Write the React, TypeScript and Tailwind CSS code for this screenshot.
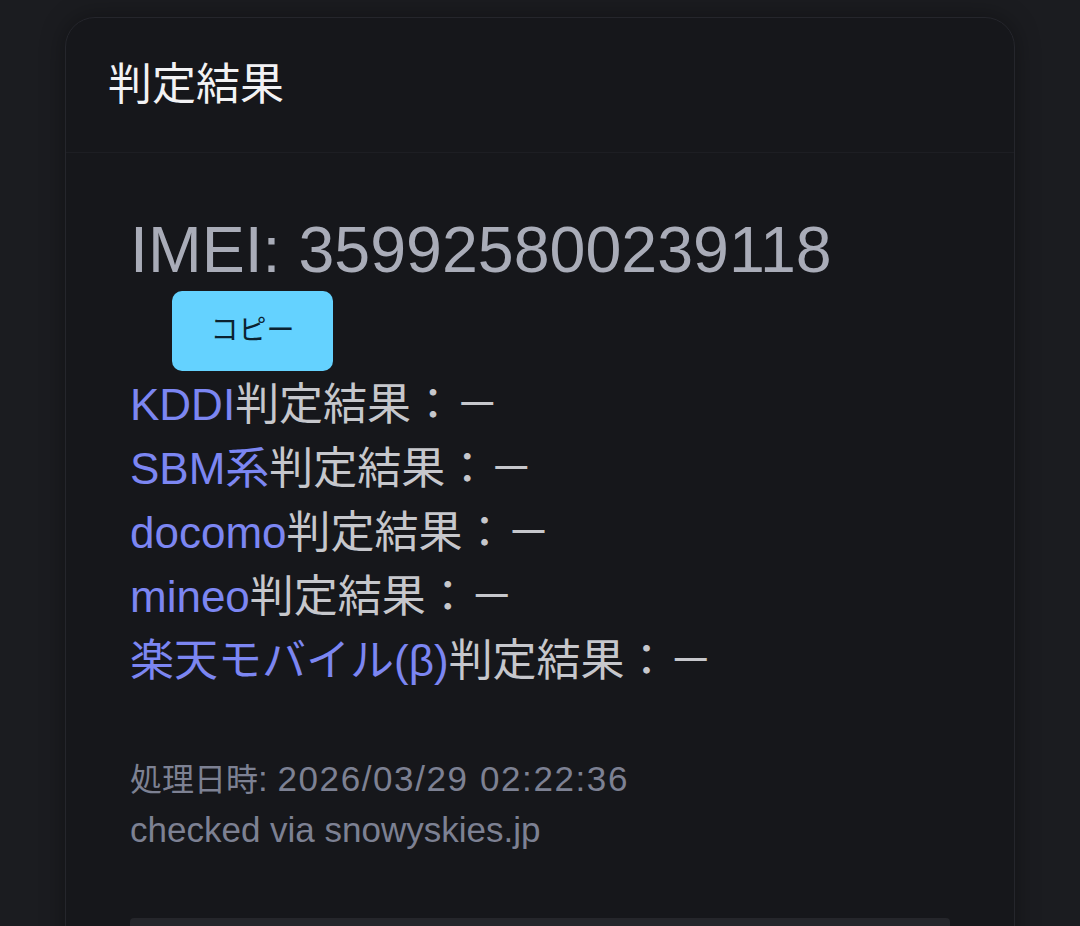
const carriers = [
  { name: 'KDDI', result: '－' },
  { name: 'SBM系', result: '－' },
  { name: 'docomo', result: '－' },
  { name: 'mineo', result: '－' },
  { name: '楽天モバイル(β)', result: '－' },
];

export default function App() {
  return (
    <div
      className="min-h-[926px] bg-[#1b1c20] px-[65px] pt-[17px]"
      style={{ fontFamily: '"Liberation Sans", "Noto Sans CJK JP", sans-serif' }}
    >
      <section className="overflow-hidden rounded-t-[30px] border border-[#25262c] bg-[#16171b] shadow-[0_0_24px_rgba(0,0,0,0.35)]">
        <header className="flex h-[135px] items-center border-b border-[#1d1e23] px-[42px]">
          <h2 className="text-[44px] leading-none text-[#f2f2f4]">判定結果</h2>
        </header>

        <div className="px-[64px] pt-[58px]">
          <p className="text-[64.5px] leading-[78px] text-[#a9acb8]">IMEI: 359925800239118</p>
          <button className="ml-[42px] mt-[2px] flex h-[80px] w-[161px] items-center justify-center rounded-[10px] bg-[#64d2ff] text-[28px] text-[#0b2230]">
            コピー
          </button>

          <ul className="mt-[2px] text-[44px] leading-[64px] text-[#c6c7cc]">
            {carriers.map((c) => (
              <li key={c.name}>
                <span className="text-[#7c86f2]">{c.name}</span>判定結果：{c.result}
              </li>
            ))}
          </ul>

          <div className="mt-[61px] text-[35px] leading-[50px] text-[#7d8193]">
            <p>
              <span className="text-[32px]">処理日時</span>: <span className="tracking-[1.6px]">2026/03/29 02:22:36</span>
            </p>
            <p>checked via snowyskies.jp</p>
          </div>

          <div className="mt-[63px] h-[40px] rounded-t-[4px] bg-[#25262b]" />
        </div>
      </section>
    </div>
  );
}
